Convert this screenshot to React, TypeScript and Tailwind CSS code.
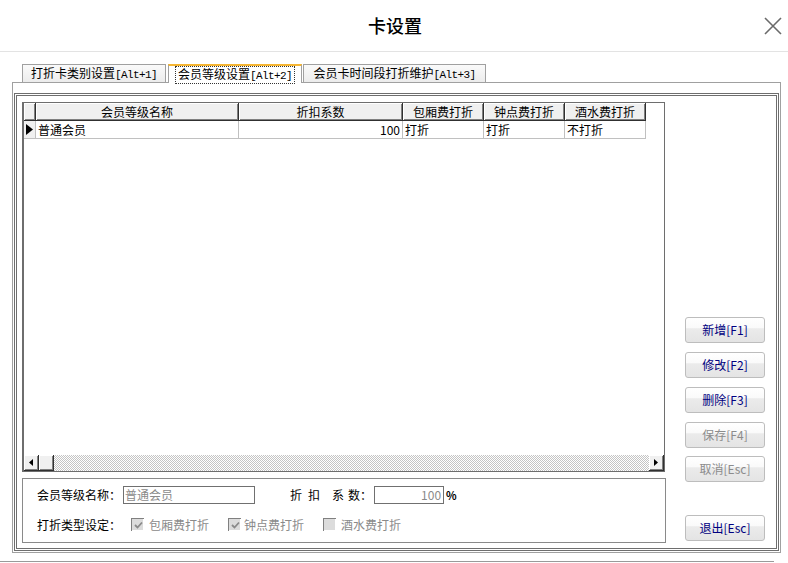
import React from "react";

const tabs = [
  { cn: "打折卡类别设置", key: "[Alt+1]", w: "w-[144px]" },
  { cn: "会员等级设置", key: "[Alt+2]", w: "w-[134px]", active: true },
  { cn: "会员卡时间段打折维护", key: "[Alt+3]", w: "w-[183px]" },
];

const buttons = [
  { label: "新增[F1]", mt: "mt-[221px]" },
  { label: "修改[F2]", mt: "mt-[9px]" },
  { label: "删除[F3]", mt: "mt-[9px]" },
  { label: "保存[F4]", mt: "mt-[9px]", disabled: true },
  { label: "取消[Esc]", mt: "mt-[8px]", disabled: true },
  { label: "退出[Esc]", mt: "mt-[33px]" },
];

const cols = [
  { title: "会员等级名称", w: "w-[203px]", value: "普通会员", align: "text-left" },
  { title: "折扣系数", w: "w-[164px]", value: "100", align: "text-right" },
  { title: "包厢费打折", w: "w-[81px]", value: "打折", align: "text-left" },
  { title: "钟点费打折", w: "w-[81px]", value: "打折", align: "text-left" },
  { title: "酒水费打折", w: "w-[81px]", value: "不打折", align: "text-left" },
];

const raised =
  "bg-[#f0f0f0] shadow-[inset_1px_1px_0_#ffffff,inset_-1px_-1px_0_#808080] border-r border-b border-[#303030]";

const Arrow = ({ dir }: { dir: "left" | "right" }) => (
  <svg width="4" height="7" viewBox="0 0 4 7">
    {dir === "left" ? <polygon points="4,0 4,7 0,3.5" fill="#000" /> : <polygon points="0,0 0,7 4,3.5" fill="#000" />}
  </svg>
);

const Check = ({ checked }: { checked: boolean }) => (
  <span className="w-[13px] h-[13px] bg-[#dcdcdc] border-t border-l border-[#808080] shadow-[inset_-1px_-1px_0_#ffffff] flex items-center justify-center">
    {checked && (
      <svg width="9" height="9" viewBox="0 0 9 9">
        <path d="M1 4 L3.5 6.5 L8 1.5" stroke="#8a8a8a" strokeWidth="1.8" fill="none" />
      </svg>
    )}
  </span>
);

export default function App() {
  return (
    <div className="w-[788px] h-[563px] bg-white overflow-hidden text-[12px] text-black font-['Noto_Sans_CJK_SC','Noto_Sans',sans-serif]">
      {/* title bar */}
      <div className="h-[52px] border-b border-[#e3e3e3] grid grid-cols-[1fr_auto_1fr] items-center">
        <div />
        <div className="text-[18px] font-medium pl-[2px]">卡设置</div>
        <div className="flex justify-end pr-[6px]">
          <svg width="18" height="18" viewBox="0 0 18 18">
            <path d="M1 1 L17 17 M17 1 L1 17" stroke="#6a6a6a" strokeWidth="1.6" />
          </svg>
        </div>
      </div>

      {/* tabs */}
      <div className="flex pl-[22px] mt-[12px] h-[18px] items-end">
        {tabs.map((t, i) => (
          <div
            key={i}
            className={
              t.active
                ? `${t.w} h-[19px] mb-[-1px] z-10 relative bg-white border-x border-[#a0a0a0] border-t-2 border-t-[#f5b532] flex items-center justify-center ml-[2px]`
                : `${t.w} h-[18px] bg-[linear-gradient(#fafafa,#ececec)] border border-[#a0a0a0] border-b-0 flex items-center justify-center ${i > 0 ? "ml-[1px]" : ""}`
            }
          >
            <span className={`whitespace-nowrap leading-[13px] ${t.active ? "border border-dotted border-[#333] px-[2px]" : ""}`}>
              {t.cn}
              <span className="font-['Liberation_Mono',monospace] text-[11px] tracking-[-0.6px]">{t.key}</span>
            </span>
          </div>
        ))}
      </div>

      {/* tab page */}
      <div className="ml-[12px] w-[769px] h-[471px] border border-[#a0a0a0] pt-[10px] px-[1px] pb-[1px]">
        <div className="h-full border-[3px] border-double border-[#6e6e6e] flex">
          {/* left column */}
          <div className="pl-[5px] pt-[6px] flex flex-col gap-[6px]">
            {/* grid */}
            <div className="w-[643px] h-[370px] border border-[#6e6e6e] border-l-2 flex flex-col bg-white">
              <div className="flex h-[18px]">
                <div className={`w-[12px] ${raised}`} />
                {cols.map((c, i) => (
                  <div key={i} className={`${c.w} ${raised} flex items-center justify-center leading-none`}>
                    {c.title}
                  </div>
                ))}
              </div>
              <div className="flex h-[18px]">
                <div className="w-[12px] border-r border-b border-[#c0c0c0] bg-[#f0f0f0] flex items-center pl-[2px]">
                  <svg width="7" height="11" viewBox="0 0 7 11">
                    <polygon points="0,0 7,5.5 0,11" fill="#000" />
                  </svg>
                </div>
                {cols.map((c, i) => (
                  <div key={i} className={`${c.w} border-r border-b border-[#c0c0c0] px-[2px] flex items-center leading-none ${c.align === "text-right" ? "justify-end" : ""}`}>
                    {c.value}
                  </div>
                ))}
              </div>
              <div className="flex-1" />
              {/* horizontal scrollbar */}
              <div className="h-[16px] flex">
                <div className={`w-[15px] ${raised} flex items-center justify-center`}>
                  <Arrow dir="left" />
                </div>
                <div className={`w-[15px] ${raised}`} />
                <div className="flex-1 bg-[image:repeating-conic-gradient(#c4c4c4_0%_25%,#ffffff_0%_50%)] bg-[length:2px_2px]" />
                <div className={`w-[15px] ${raised} flex items-center justify-center`}>
                  <Arrow dir="right" />
                </div>
              </div>
            </div>

            {/* edit panel */}
            <div className="w-[644px] h-[65px] border border-[#8a8a8a] pl-[14px] pt-[7px]">
              <div className="flex items-center h-[18px]">
                <span className="w-[86px]">会员等级名称：</span>
                <div className="w-[132px] h-[18px] border border-[#707070] px-[1px] flex items-center text-[#8a8a8a] leading-none">
                  普通会员
                </div>
                <span className="ml-[35px] flex">
                  <span className="mr-[6px]">折</span>
                  <span className="mr-[12px]">扣</span>
                  <span className="mr-[4px]">系</span>
                  <span>数</span>
                  <span className="w-[14px]">：</span>
                </span>
                <div className="w-[70px] h-[18px] border border-[#707070] px-[2px] flex items-center justify-end text-[#8a8a8a] leading-none">
                  100
                </div>
                <span className="ml-[2px] font-bold text-[11px]">%</span>
              </div>
              <div className="flex items-center h-[13px] mt-[14px]">
                <span className="w-[94px]">打折类型设定：</span>
                <Check checked />
                <span className="ml-[5px] text-[#8a8a8a] w-[79px]">包厢费打折</span>
                <Check checked />
                <span className="ml-[3px] text-[#8a8a8a] w-[79px]">钟点费打折</span>
                <Check checked={false} />
                <span className="ml-[5px] text-[#8a8a8a]">酒水费打折</span>
              </div>
            </div>
          </div>

          {/* right buttons */}
          <div className="ml-[19px] flex flex-col">
            {buttons.map((b, i) => (
              <button
                key={i}
                className={`${b.mt} w-[80px] h-[26px] rounded-[3px] border border-[#bdbdbd] bg-[image:linear-gradient(#ffffff_0%,#fafafa_40%,#ebebeb_45%,#e4e4e4_100%)] flex items-center justify-center leading-none ${
                  b.disabled ? "text-[#8c8c8c]" : "text-[#000080]"
                }`}
              >
                {b.label}
              </button>
            ))}
          </div>
        </div>
      </div>

      <div className="mt-[8px] w-[774px] h-px bg-[#9a9a9a]" />
    </div>
  );
}
